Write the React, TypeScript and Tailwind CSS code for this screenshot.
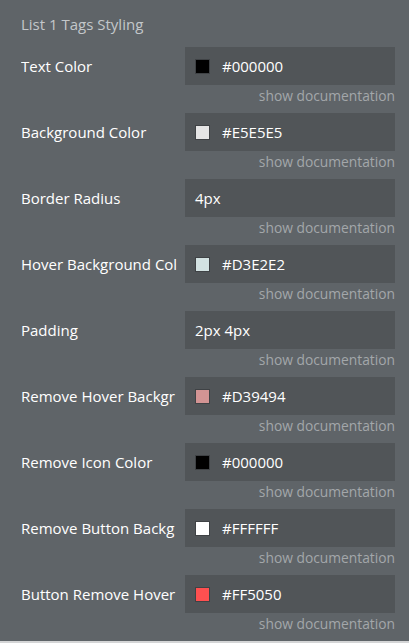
const rows: { label: string; value: string; swatch?: string }[] = [
  { label: "Text Color", value: "#000000", swatch: "#000000" },
  { label: "Background Color", value: "#E5E5E5", swatch: "#E5E5E5" },
  { label: "Border Radius", value: "4px" },
  { label: "Hover Background Col", value: "#D3E2E2", swatch: "#D3E2E2" },
  { label: "Padding", value: "2px 4px" },
  { label: "Remove Hover Backgr", value: "#D39494", swatch: "#D39494" },
  { label: "Remove Icon Color", value: "#000000", swatch: "#000000" },
  { label: "Remove Button Backg", value: "#FFFFFF", swatch: "#FFFFFF" },
  { label: "Button Remove Hover", value: "#FF5050", swatch: "#FF5050" },
]

export default function App() {
  return (
    <div className="w-[409px] h-[643px] bg-[#d4d5d6] font-['Open_Sans',sans-serif]">
      <div className="h-[641px] bg-[#5f6468] pl-[21px] pr-[14px]">
        <div className="h-[47px] pt-[14px] text-[15px] leading-[20px] text-[#c3c7ca]">
          List 1 Tags Styling
        </div>
        {rows.map((r) => (
          <div key={r.label}>
            <div className="flex items-center h-[38px]">
              <div className="w-[157px] mr-[7px] overflow-hidden whitespace-nowrap text-[15px] font-medium text-white">
                {r.label}
              </div>
              <div className="flex-1 h-full bg-[#515558] flex items-center pl-[10px] text-[15px] text-white">
                {r.swatch && (
                  <span
                    className="w-[15px] h-[15px] mr-[12px] border border-[#3f4245]"
                    style={{ backgroundColor: r.swatch }}
                  />
                )}
                {r.value}
              </div>
            </div>
            <div className="h-[28px] text-right text-[13.8px] leading-[22px] text-[#a3a7aa]">
              show documentation
            </div>
          </div>
        ))}
      </div>
    </div>
  )
}
